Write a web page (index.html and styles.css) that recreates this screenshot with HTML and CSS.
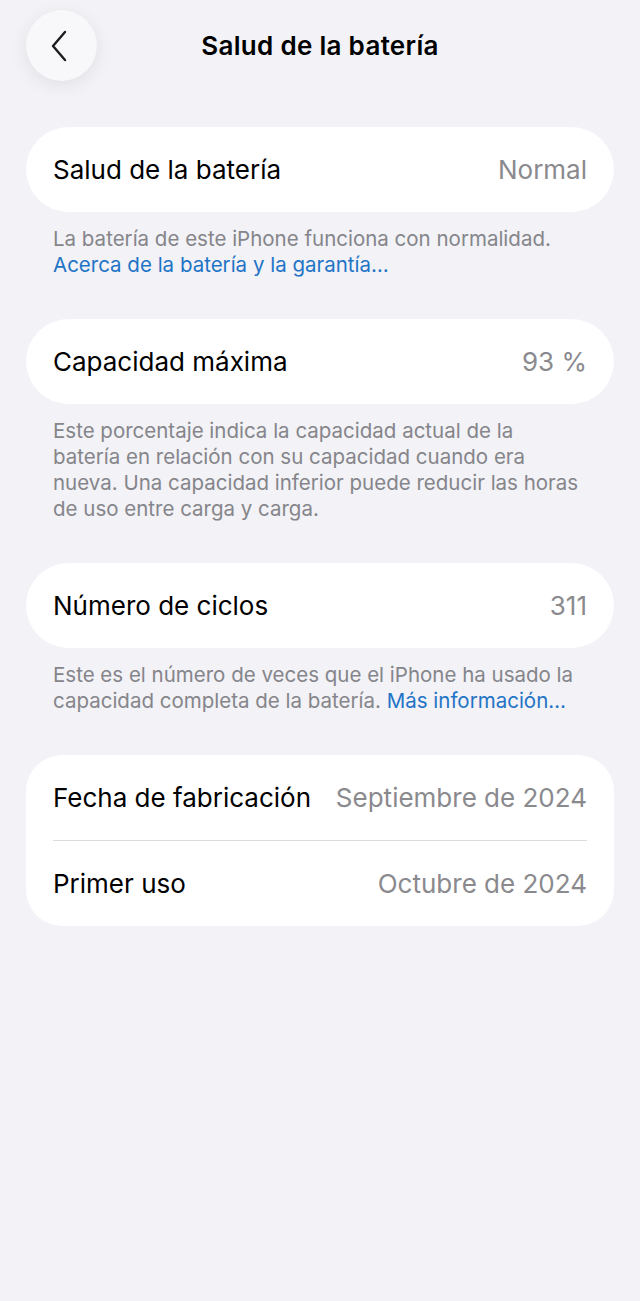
FILE: index.html
```html
<!DOCTYPE html>
<html lang="es">
<head>
<meta charset="UTF-8" />
<meta name="viewport" content="width=device-width, initial-scale=1.0" />
<title>Salud de la batería</title>
<link rel="stylesheet" href="styles.css">
</head>
<body>
<div class="screen">
  <!-- Barra superior -->
  <header class="nav-bar">
    <button class="back-button" aria-label="Atrás">
      <svg width="22" height="34" viewBox="0 0 22 34">
        <path d="M16 3 L4 17 L16 31" fill="none" stroke="#1c1c1e" stroke-width="2.4" stroke-linecap="round" stroke-linejoin="round" />
      </svg>
    </button>
    <h1 class="nav-title">Salud de la batería</h1>
  </header>

  <!-- Secciones -->
  <section class="group">
    <div class="cell">
      <span class="cell-label">Salud de la batería</span>
      <span class="cell-value">Normal</span>
    </div>
  </section>
  <p class="footnote">
    La batería de este iPhone funciona con normalidad.<br>
    <a href="#" class="link">Acerca de la batería y la garantía…</a>
  </p>

  <section class="group">
    <div class="cell">
      <span class="cell-label">Capacidad máxima</span>
      <span class="cell-value">93 %</span>
    </div>
  </section>
  <p class="footnote">
    Este porcentaje indica la capacidad actual de la<br>
    batería en relación con su capacidad cuando era<br>
    nueva. Una capacidad inferior puede reducir las horas<br>
    de uso entre carga y carga.
  </p>

  <section class="group">
    <div class="cell">
      <span class="cell-label">Número de ciclos</span>
      <span class="cell-value">311</span>
    </div>
  </section>
  <p class="footnote">
    Este es el número de veces que el iPhone ha usado la<br>
    capacidad completa de la batería. <a href="#" class="link">Más información…</a>
  </p>

  <section class="group group-list">
    <div class="cell">
      <span class="cell-label">Fecha de fabricación</span>
      <span class="cell-value">Septiembre de 2024</span>
    </div>
    <div class="cell">
      <span class="cell-label">Primer uso</span>
      <span class="cell-value">Octubre de 2024</span>
    </div>
  </section>
</div>
</body>
</html>
```

FILE: styles.css
```css
/* General */
body {
  margin: 0;
  padding: 0;
  background-color: #f2f2f7;
  font-family: Inter, "Liberation Sans", sans-serif;
  color: #000;
}
.screen {
  padding: 10px 26px 40px;
}

/* Barra superior */
.nav-bar {
  display: flex;
  align-items: center;
  height: 71px;
  margin-bottom: 46px;
}
.back-button {
  width: 71px;
  height: 71px;
  border: none;
  border-radius: 50%;
  background-color: #f8f8fb;
  box-shadow: 0 4px 18px rgba(0, 0, 0, 0.08);
  display: flex;
  align-items: center;
  justify-content: center;
  padding: 0 4px 0 0;
  cursor: pointer;
  flex-shrink: 0;
}
.nav-title {
  flex: 1;
  margin: 0 71px 0 0;
  text-align: center;
  font-size: 26px;
  font-weight: 600;
  letter-spacing: 0.3px;
}

/* Grupos */
.group {
  background-color: #fff;
  border-radius: 43px;
}
.group-list {
  border-radius: 36px;
}
.cell {
  display: flex;
  align-items: center;
  justify-content: space-between;
  height: 85px;
  margin: 0 27px;
  font-size: 26px;
}
.group-list .cell + .cell {
  border-top: 1px solid #dcdce0;
}
.cell-label {
  color: #000;
}
.cell-value {
  color: #8a8a8e;
}

/* Notas al pie */
.footnote {
  margin: 0;
  padding: 14px 10px 41px 27px;
  font-size: 20.5px;
  line-height: 26px;
  color: #85858a;
  white-space: nowrap;
}
.link {
  color: #1f74c6;
  text-decoration: none;
}
```
